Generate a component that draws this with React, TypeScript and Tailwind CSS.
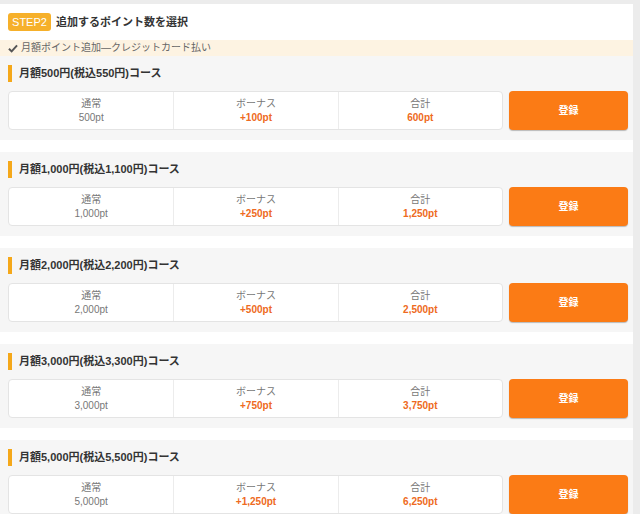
import React from "react";

const courses = [
  { title: "月額500円(税込550円)コース", base: "500pt", bonus: "+100pt", total: "600pt" },
  { title: "月額1,000円(税込1,100円)コース", base: "1,000pt", bonus: "+250pt", total: "1,250pt" },
  { title: "月額2,000円(税込2,200円)コース", base: "2,000pt", bonus: "+500pt", total: "2,500pt" },
  { title: "月額3,000円(税込3,300円)コース", base: "3,000pt", bonus: "+750pt", total: "3,750pt" },
  { title: "月額5,000円(税込5,500円)コース", base: "5,000pt", bonus: "+1,250pt", total: "6,250pt" },
];

export default function App() {
  return (
    <div
      className="w-[640px] h-[514px] overflow-hidden bg-[#ececec] pt-[4px]"
      style={{ fontFamily: '"Liberation Sans", "Noto Sans CJK JP", sans-serif' }}
    >
      <div className="w-[633px] bg-white">
        <div className="h-[36px] flex items-center pl-[8px] gap-[5px]">
          <span className="h-[18px] w-[43px] text-center rounded-[3px] bg-[#f6b02a] text-white text-[11px] leading-[18px]">
            STEP2
          </span>
          <span className="text-[11px] font-bold text-[#333]">追加するポイント数を選択</span>
        </div>
        <div className="h-[16px] bg-[#fdf3e2] flex items-center pl-[8px] gap-[3px] text-[10px] text-[#666] leading-none">
          <svg width="10" height="9" viewBox="0 0 11 10">
            <path d="M1 5.2 L4 8.2 L10 1.6" fill="none" stroke="#555" strokeWidth="2.2" />
          </svg>
          <span>月額ポイント追加—クレジットカード払い</span>
        </div>
        <div className="flex flex-col gap-[12px]">
          {courses.map((c) => (
            <div key={c.title} className="h-[84px] bg-[#f6f6f6] pl-[8px] pr-[5px] pt-[9px]">
              <div className="flex items-center h-[17px]">
                <div className="w-[4px] h-[17px] bg-[#f5a81a]" />
                <span className="ml-[7px] text-[11px] font-bold text-[#333] leading-none">{c.title}</span>
              </div>
              <div className="mt-[9px] flex gap-[6px]">
                <div className="w-[495px] h-[39px] bg-white border border-[#e4e4e4] rounded-[4px] grid grid-cols-3">
                  <div className="flex flex-col items-center justify-center text-[10px] leading-[14px]">
                    <span className="text-[#777]">通常</span>
                    <span className="text-[#777]">{c.base}</span>
                  </div>
                  <div className="flex flex-col items-center justify-center text-[10px] leading-[14px] border-l border-[#ececec]">
                    <span className="text-[#777]">ボーナス</span>
                    <span className="text-[#ee6a22] font-bold">{c.bonus}</span>
                  </div>
                  <div className="flex flex-col items-center justify-center text-[10px] leading-[14px] border-l border-[#ececec]">
                    <span className="text-[#777]">合計</span>
                    <span className="text-[#ee6a22] font-bold">{c.total}</span>
                  </div>
                </div>
                <button className="w-[119px] h-[39px] rounded-[4px] bg-[#fb7b15] text-white text-[10px] font-bold shadow-[0_1px_1px_rgba(0,0,0,0.25)]">
                  登録
                </button>
              </div>
            </div>
          ))}
        </div>
      </div>
    </div>
  );
}
